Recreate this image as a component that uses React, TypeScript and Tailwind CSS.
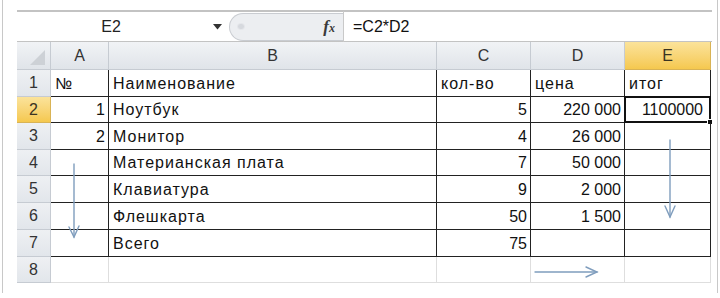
import React from "react";

const cols = [58, 328, 94, 94, 86];
const colLetters = ["A", "B", "C", "D", "E"];
const rowHeights = [27, 26, 27, 26, 27, 27, 27, 26];

type Cell = { t: string; r?: boolean };
const data: Cell[][] = [
  [{ t: "№" }, { t: "Наименование" }, { t: "кол-во" }, { t: "цена" }, { t: "итог" }],
  [{ t: "1", r: true }, { t: "Ноутбук" }, { t: "5", r: true }, { t: "220 000", r: true }, { t: "1100000", r: true }],
  [{ t: "2", r: true }, { t: "Монитор" }, { t: "4", r: true }, { t: "26 000", r: true }, { t: "" }],
  [{ t: "" }, { t: "Материанская плата" }, { t: "7", r: true }, { t: "50 000", r: true }, { t: "" }],
  [{ t: "" }, { t: "Клавиатура" }, { t: "9", r: true }, { t: "2 000", r: true }, { t: "" }],
  [{ t: "" }, { t: "Флешкарта" }, { t: "50", r: true }, { t: "1 500", r: true }, { t: "" }],
  [{ t: "" }, { t: "Всего" }, { t: "75", r: true }, { t: "" }, { t: "" }],
  [{ t: "" }, { t: "" }, { t: "" }, { t: "" }, { t: "" }],
];

const font = { fontFamily: '"Liberation Sans", Arial, sans-serif' };

export default function App() {
  return (
    <div className="relative w-[720px] h-[298px] bg-white overflow-hidden" style={font}>
      <div className="ml-[2px] w-[716px] h-[293px] border-l border-r border-[#c8c8c8] pl-[14px] pt-[10px]">
        {/* formula bar */}
        <div className="w-[695px] h-[32px] border-t-2 border-b border-[#c3c3c3] flex items-center bg-white">
          <div className="w-[188px] text-center text-[16px] text-[#222] leading-none">E2</div>
          <div className="w-[24px] flex justify-center">
            <svg width="9" height="6" viewBox="0 0 9 6">
              <path d="M0 0 L9 0 L4.5 5.5 Z" fill="#333" />
            </svg>
          </div>
          <div className="w-[114px] h-[28px] rounded-l-full border border-r-0 border-[#c9ccd1] bg-[#eceef1] flex items-center justify-between pl-[7px] pr-[8px]">
            <div className="w-[8px] h-[7px] rounded-full bg-[#d6d9de] border border-[#e6e8ec]" />
            <span
              className="text-[17px] italic font-bold text-[#3a3a3a] leading-none"
              style={{ fontFamily: '"Liberation Serif", "Times New Roman", serif' }}
            >
              f<span className="text-[12px]">x</span>
            </span>
          </div>
          <div className="w-px h-[31px] bg-[#c9c9c9]" />
          <div className="pl-[9px] text-[16px] text-[#111] leading-none">=C2*D2</div>
        </div>

        {/* header row */}
        <div className="flex h-[28px]">
          <div className="w-[34px] h-full bg-gradient-to-b from-[#f1f3f6] to-[#e0e4e9] border-r border-b border-[#c6cbd2] relative">
            <svg className="absolute right-[5px] bottom-[4px]" width="15" height="15" viewBox="0 0 15 15">
              <path d="M15 0 L15 15 L0 15 Z" fill="#cdd1d6" />
            </svg>
          </div>
          {cols.map((w, i) => (
            <div
              key={i}
              style={{ width: w }}
              className={
                "h-full flex items-center justify-center text-[16px] border-r border-b " +
                (i === 4
                  ? "bg-gradient-to-b from-[#fbe39a] to-[#f5c84e] border-[#d9b355] text-[#3a3422]"
                  : "bg-gradient-to-b from-[#f1f3f6] to-[#e0e4e9] border-[#c6cbd2] text-[#333]")
              }
            >
              {colLetters[i]}
            </div>
          ))}
        </div>

        {/* rows */}
        {data.map((row, ri) => {
          const h = rowHeights[ri];
          const inTable = ri < 7;
          const sel = ri === 1;
          return (
            <div key={ri} className="flex" style={{ height: h }}>
              <div
                className={
                  "w-[34px] h-full flex items-center justify-center text-[16px] border-r border-b " +
                  (sel
                    ? "bg-gradient-to-b from-[#fbe39a] to-[#f5c84e] border-[#d9b355] text-[#3a3422]"
                    : "bg-gradient-to-b from-[#eef0f3] to-[#e2e6eb] border-[#c6cbd2] text-[#333]")
                }
              >
                {ri + 1}
              </div>
              {row.map((c, ci) => {
                const isSel = sel && ci === 4;
                return (
                  <div
                    key={ci}
                    style={{ width: cols[ci] }}
                    className={
                      "relative h-full flex items-end pb-[4px] text-[16px] leading-none text-[#111] border-b " +
                      (c.r
                        ? "justify-end " + (isSel ? "pr-[7px] " : "pr-[3px] ")
                        : "justify-start pl-[4px] tracking-[1px] ") +
                      (inTable ? "border-[#222] border-r" : "border-[#dedede] border-r")
                    }
                  >
                    {c.t}
                    {isSel && (
                      <div className="absolute -left-[1px] -top-[1px] -right-[1px] -bottom-[1px] border-2 border-[#111]">
                        <div className="absolute -right-[4px] -bottom-[4px] w-[6px] h-[6px] bg-[#111] border border-white" />
                      </div>
                    )}
                  </div>
                );
              })}
            </div>
          );
        })}
      </div>

      {/* hand-drawn arrows */}
      <svg className="absolute left-0 top-0 pointer-events-none" width="720" height="298">
        <g stroke="#7f9dbd" strokeWidth="1.4" fill="none" strokeLinecap="round">
          <path d="M74 164 L74 237" />
          <path d="M69 227 L74 237 L79 226" />
          <path d="M670 140 L670 217" />
          <path d="M665 206 L670 217 L675 206" />
          <path d="M535 272 L597 272" />
          <path d="M586 267 L597 272 L586 277" />
        </g>
      </svg>
    </div>
  );
}
